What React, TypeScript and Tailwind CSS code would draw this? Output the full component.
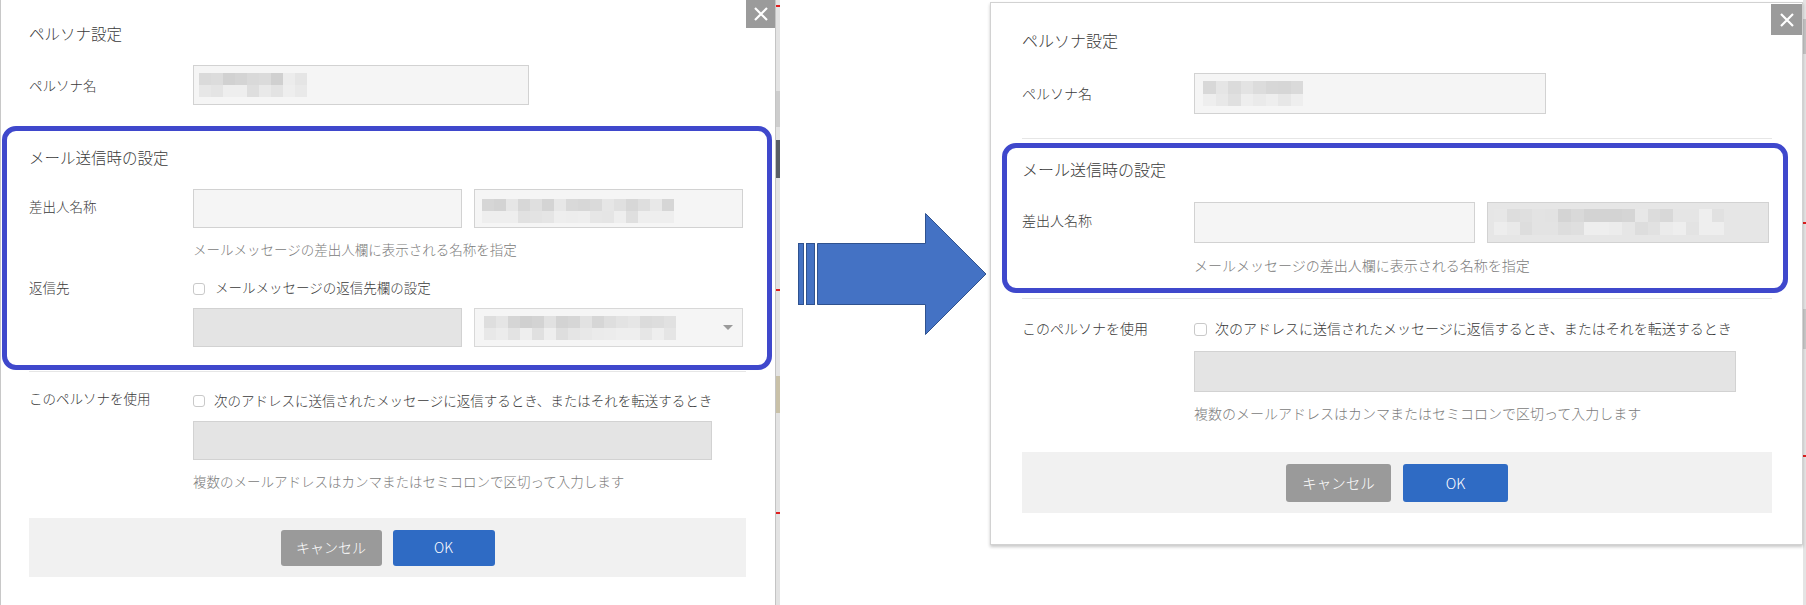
import React from 'react';

// pixelated placeholder that hides the real values in the screenshot
function Mosaic({ cols, cell, seed }: { cols: number; cell: number; seed: number }) {
  const shades: string[] = [];
  let s = seed;
  for (let r = 0; r < 2; r++) {
    for (let c = 0; c < cols; c++) {
      s = (s * 9301 + 49297) % 233280;
      const base = r === 0 ? 206 : 221;
      const fade = c > cols - 3 ? 8 : 0;
      const v = Math.min(238, base + fade + Math.floor((s / 233280) * 26));
      shades.push(`rgb(${v},${v},${v})`);
    }
  }
  return (
    <div
      className="grid"
      style={{ gridTemplateColumns: `repeat(${cols}, ${cell}px)`, gridAutoRows: `${cell}px` }}
    >
      {shades.map((c, i) => (
        <div key={i} style={{ backgroundColor: c }} />
      ))}
    </div>
  );
}

const CloseBtn: React.FC<{ className: string }> = ({ className }) => (
  <div className={`absolute flex items-center justify-center bg-[#9b9b9b] ${className}`}>
    <svg width="14" height="14" viewBox="0 0 14 14">
      <path d="M1 1L13 13M13 1L1 13" stroke="white" strokeWidth="2.2" />
    </svg>
  </div>
);

const Checkbox: React.FC<{ className: string }> = ({ className }) => (
  <span className={`inline-block shrink-0 rounded-[3px] border border-[#c9c9c9] bg-white ${className}`} />
);

const Caret = () => (
  <svg width="10" height="5" viewBox="0 0 10 5">
    <path d="M0 0H10L5 5Z" fill="#9a9a9a" />
  </svg>
);

const LeftDialog = () => (
  <div className="relative h-[605px] w-[775px] shrink-0 border-l border-[#c8c8c8] bg-white pl-[28px] pr-[29px] pt-[23px] text-[13.5px] text-[#3a3a3a]">
    <CloseBtn className="right-0 top-0 h-[28px] w-[29px]" />
    <div className="text-[15.5px] leading-[20px]">ペルソナ設定</div>

    <div className="mt-[22px] flex items-center">
      <div className="w-[164px] leading-[20px]">ペルソナ名</div>
      <div className="h-[40px] w-[336px] border border-[#d2d2d2] bg-[#f5f5f5] pl-[5px] pt-[7px]">
        <Mosaic cols={9} cell={12} seed={7} />
      </div>
    </div>

    {/* highlighted section */}
    <div className="-ml-[27px] -mr-[26px] mt-[21px] rounded-[14px] border-[5px] border-[#3f48cc] pb-[18px] pl-[22px] pr-[21px] pt-[16px]">
      <div className="text-[15.5px] leading-[20px]">メール送信時の設定</div>
      <div className="mt-[22px] flex items-start">
        <div className="w-[164px] pt-[7px] leading-[20px]">差出人名称</div>
        <div>
          <div className="flex gap-[12px]">
            <div className="h-[39px] w-[269px] border border-[#d2d2d2] bg-[#f5f5f5]" />
            <div className="h-[39px] w-[269px] border border-[#d2d2d2] bg-[#f5f5f5] pl-[7px] pt-[9px]">
              <Mosaic cols={16} cell={12} seed={3} />
            </div>
          </div>
          <div className="mt-[11px] leading-[20px] text-[#7b7b7b]">メールメッセージの差出人欄に表示される名称を指定</div>
        </div>
      </div>
      <div className="mt-[18px] flex items-start">
        <div className="w-[164px] leading-[20px]">返信先</div>
        <div>
          <div className="flex items-center gap-[10px] leading-[20px]">
            <Checkbox className="mt-[3px] size-[12px]" />
            <span>メールメッセージの返信先欄の設定</span>
          </div>
          <div className="mt-[11px] flex gap-[12px]">
            <div className="h-[39px] w-[269px] border border-[#d2d2d2] bg-[#e4e4e4]" />
            <div className="flex h-[39px] w-[269px] items-center justify-between border border-[#d8d8d8] bg-[#f5f5f5] pl-[9px] pr-[9px]">
              <Mosaic cols={16} cell={12} seed={11} />
              <Caret />
            </div>
          </div>
        </div>
      </div>
    </div>
    <div className="mt-px h-px bg-[#e6e6e6]" />

    <div className="mt-[16px] flex items-start">
      <div className="w-[164px] leading-[20px]">このペルソナを使用</div>
      <div>
        <div className="flex items-center gap-[9px] pt-[2px] leading-[20px]">
          <Checkbox className="mt-[2px] size-[12px]" />
          <span>次のアドレスに送信されたメッセージに返信するとき、またはそれを転送するとき</span>
        </div>
        <div className="mt-[11px] h-[39px] w-[519px] border border-[#d2d2d2] bg-[#e4e4e4]" />
        <div className="mt-[11px] leading-[20px] text-[#7b7b7b]">複数のメールアドレスはカンマまたはセミコロンで区切って入力します</div>
      </div>
    </div>

    <div className="mt-[27px] flex h-[59px] items-center justify-center gap-[11px] bg-[#f1f1f1]">
      <button className="h-[36px] w-[101px] rounded-[3px] bg-[#9a9a9a] text-[14px] text-white">キャンセル</button>
      <button className="h-[36px] w-[102px] rounded-[3px] bg-[#2f6bc4] text-[14px] text-white">OK</button>
    </div>
  </div>
);

const RightDialog = () => (
  <div className="relative mt-[2px] h-[543px] w-[813px] shrink-0 border border-[#d2d2d2] bg-white pl-[31px] pr-[30px] pt-[27px] text-[14px] text-[#3a3a3a] shadow-[0_2px_3px_rgba(0,0,0,0.22)]">
    <CloseBtn className="right-0 top-px h-[31px] w-[31px]" />
    <div className="text-[16px] leading-[21px]">ペルソナ設定</div>

    <div className="mt-[22px] flex items-center">
      <div className="w-[172px] leading-[21px]">ペルソナ名</div>
      <div className="h-[41px] w-[352px] border border-[#d2d2d2] bg-[#f5f5f5] pl-[8px] pt-[7px]">
        <Mosaic cols={8} cell={12.5} seed={5} />
      </div>
    </div>
    <div className="mt-[24px] h-px bg-[#e6e6e6]" />

    {/* highlighted section */}
    <div className="-ml-[20px] -mr-[16px] mt-[4px] rounded-[14px] border-[5px] border-[#3f48cc] pb-[13px] pl-[15px] pr-[11px] pt-[11px]">
      <div className="text-[16px] leading-[21px]">メール送信時の設定</div>
      <div className="mt-[22px] flex items-start">
        <div className="w-[172px] pt-[8px] leading-[21px]">差出人名称</div>
        <div>
          <div className="flex gap-[12px]">
            <div className="h-[41px] w-[281px] border border-[#d2d2d2] bg-[#f5f5f5]" />
            <div className="h-[41px] w-[282px] border border-[#d2d2d2] bg-[#e6e6e6] pl-[6px] pt-[6px]">
              <Mosaic cols={18} cell={12.8} seed={19} />
            </div>
          </div>
          <div className="mt-[12px] leading-[20px] text-[#7b7b7b]">メールメッセージの差出人欄に表示される名称を指定</div>
        </div>
      </div>
    </div>
    <div className="mt-[5px] h-px bg-[#e6e6e6]" />

    <div className="mt-[19px] flex items-start">
      <div className="w-[172px] leading-[21px]">このペルソナを使用</div>
      <div>
        <div className="flex items-center gap-[8px] leading-[21px]">
          <Checkbox className="mt-[2px] size-[13px]" />
          <span>次のアドレスに送信されたメッセージに返信するとき、またはそれを転送するとき</span>
        </div>
        <div className="mt-[12px] h-[41px] w-[542px] border border-[#d2d2d2] bg-[#e4e4e4]" />
        <div className="mt-[11px] leading-[20px] text-[#7b7b7b]">複数のメールアドレスはカンマまたはセミコロンで区切って入力します</div>
      </div>
    </div>

    <div className="mt-[29px] flex h-[61px] items-center justify-center gap-[12px] bg-[#f1f1f1]">
      <button className="h-[38px] w-[105px] rounded-[3px] bg-[#9a9a9a] text-[14.5px] text-white">キャンセル</button>
      <button className="h-[38px] w-[105px] rounded-[3px] bg-[#2f6bc4] text-[14.5px] text-white">OK</button>
    </div>
  </div>
);

export default function App() {
  return (
    <div className="flex h-[605px] w-[1806px] overflow-hidden bg-white font-['Noto_Sans_CJK_JP','Noto_Sans',sans-serif] font-light">
      <LeftDialog />

      {/* edge of the window behind the first screenshot */}
      <div className="flex h-[605px] w-[5px] shrink-0 flex-col border-l border-[#c4c4c4] bg-[#e3e3e3]">
        <div className="h-[5px]" />
        <div className="h-[2px] bg-[#e02020]" />
        <div className="h-[84px]" />
        <div className="h-[36px] bg-[#cdcdcd]" />
        <div className="h-[13px]" />
        <div className="h-[38px] bg-[#5a5f66]" />
        <div className="h-[111px]" />
        <div className="h-[2px] bg-[#e02020]" />
        <div className="h-[85px]" />
        <div className="h-[37px] bg-[#c9c1a8]" />
        <div className="h-[99px]" />
        <div className="h-[2px] bg-[#e02020]" />
      </div>

      {/* arrow */}
      <div className="w-[210px] shrink-0 pl-[18px] pt-[213px]">
        <svg width="189" height="122" viewBox="0 0 189 122">
          <rect x="0.5" y="30.5" width="5" height="61" fill="#4472c4" stroke="#2f528f" />
          <rect x="8.5" y="30.5" width="8" height="61" fill="#4472c4" stroke="#2f528f" />
          <path d="M19.5 30.5H127.5V0.5L188 61L127.5 121.5V91.5H19.5Z" fill="#4472c4" stroke="#2f528f" />
        </svg>
      </div>

      <RightDialog />

      <div className="flex h-[605px] w-[3px] shrink-0 flex-col bg-[#e4e4e4]">
        <div className="h-[19px]" />
        <div className="h-[35px] bg-[#c3c3c3]" />
        <div className="h-[168px]" />
        <div className="h-[2px] bg-[#e02020]" />
        <div className="h-[85px]" />
        <div className="h-[40px] bg-[#c8c8c8]" />
        <div className="h-[106px]" />
        <div className="h-[2px] bg-[#e02020]" />
      </div>
    </div>
  );
}
